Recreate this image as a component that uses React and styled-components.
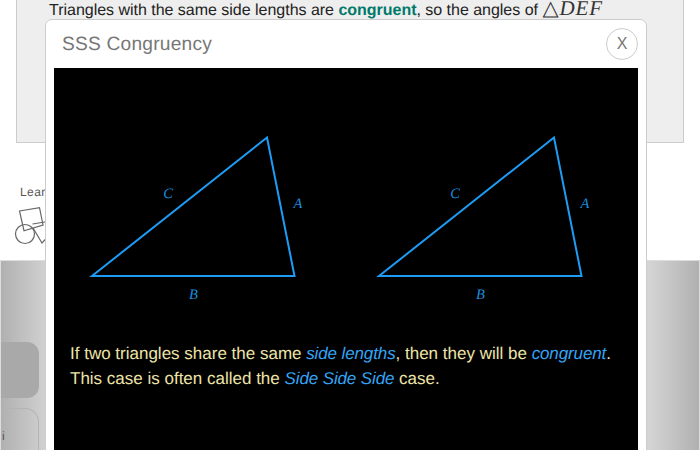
import React from "react";
import styled, { createGlobalStyle } from "styled-components";

const Global = createGlobalStyle`
  html, body { margin: 0; padding: 0; background: #fff; }
  body {
    font-family: "Liberation Sans", Arial, sans-serif;
    text-rendering: geometricPrecision;
  }
`;

const Page = styled.div`
  position: relative;
  width: 700px;
  height: 450px;
  overflow: hidden;
  display: flex;
  flex-direction: column;
  background: #fff;
`;

const Panel = styled.section`
  box-sizing: border-box;
  flex: none;
  height: 143px;
  margin: 0 16px;
  padding: 0 32px;
  background: #eee;
  border: 1px solid #ccc;
  border-top: none;
`;

const Sentence = styled.p`
  margin: -1px 0 0;
  font-size: 16px;
  line-height: 18px;
  letter-spacing: -0.02px;
  color: #222;
  white-space: nowrap;
`;

const Key = styled.strong`
  color: #00796b;
`;

const MathText = styled.span`
  font-family: "Liberation Serif", serif;
  font-style: italic;
  font-size: 21px;
  letter-spacing: 0.9px;
  color: #333;
`;

const Delta = styled.span`
  font-family: "DejaVu Sans", sans-serif;
  font-style: normal;
  font-size: 21px;
`;

const Related = styled.section`
  box-sizing: border-box;
  flex: none;
  height: 117px;
  padding: 42px 0 0 20px;
`;

const RelatedLabel = styled.div`
  font-size: 12px;
  line-height: 14px;
  letter-spacing: 0.4px;
  color: #555;
`;

const ShapesIcon = styled.svg`
  display: block;
  width: 50px;
  height: 46px;
  margin: 7px 0 0 -6px;
`;

const Band = styled.section`
  box-sizing: border-box;
  flex: 1;
  min-height: 0;
  overflow: hidden;
  padding: 81px 0 0 0;
  border: 1px solid #ddd;
  border-bottom: none;
  background: linear-gradient(90deg, #b0b0b0 0, #d4d4d4 7%, #d4d4d4 93%, #b0b0b0 100%);
`;

const SideColumn = styled.div`
  width: 38px;
  display: flex;
  flex-direction: column;
  gap: 10px;
`;

const SideButton = styled.div`
  height: 56px;
  background: #a9a9a9;
  border-radius: 0 12px 12px 0;
`;

const SideCard = styled.div`
  box-sizing: border-box;
  height: 80px;
  padding: 20px 0 0 1px;
  border: 1px solid #b4b4b4;
  border-left: none;
  border-radius: 0 14px 0 0;
  font-size: 12px;
  line-height: 14px;
  color: #555;
`;

const Modal = styled.div`
  position: absolute;
  left: 45px;
  top: 19px;
  width: 602px;
  height: 460px;
  box-sizing: border-box;
  padding: 0 8px;
  background: #fff;
  border: 1px solid #ccc;
  border-radius: 7px;
`;

const ModalHeader = styled.header`
  height: 48px;
  display: flex;
  align-items: center;
  justify-content: space-between;
  padding: 0 0 0 8px;
`;

const ModalTitle = styled.h2`
  margin: 2px 0 0;
  font-size: 19.2px;
  font-weight: 400;
  letter-spacing: 0.2px;
  color: #777;
`;

const CloseButton = styled.button`
  box-sizing: border-box;
  width: 32px;
  height: 32px;
  padding: 0;
  border: 1px solid #ccc;
  border-radius: 50%;
  background: #fff;
  font-family: "Liberation Sans", Arial, sans-serif;
  font-size: 16px;
  color: #777;
`;

const Stage = styled.div`
  width: 584px;
  height: 400px;
  background: #000;
`;

const Figure = styled.svg`
  display: block;
  width: 584px;
  height: 258px;
`;

const SideLabel = styled.text`
  font-family: "Liberation Serif", serif;
  font-style: italic;
  font-size: 14.500px;
  fill: #1c8ede;
  text-anchor: middle;
`;

const Caption = styled.p`
  margin: 15px 16px 0;
  font-size: 17px;
  line-height: 25px;
  color: #eee4a8;
`;

const Term = styled.em`
  color: #35a4f4;
  letter-spacing: -0.12px;
`;

const Triangle = ({ dx }) => (
  <g transform={`translate(${dx} 0)`}>
    <polygon points="38,208 213,69.500 240.500,208" fill="none" stroke="#1e9cf5" strokeWidth="2" />
    <SideLabel x="114" y="130">C</SideLabel>
    <SideLabel x="244" y="140">A</SideLabel>
    <SideLabel x="139.500" y="231">B</SideLabel>
  </g>
);

export default function App() {
  return (
    <Page>
      <Global />
      <Panel>
        <Sentence>
          Triangles with the same side lengths are <Key>congruent</Key>, so the angles of{" "}
          <MathText><Delta>△</Delta>DEF</MathText>
        </Sentence>
      </Panel>
      <Related>
        <RelatedLabel>Learn</RelatedLabel>
        <ShapesIcon viewBox="0 0 50 46" fill="none" stroke="#666" strokeWidth="1.2">
          <polygon points="5.500,5 25.500,1.700 29,19 10,24.700" />
          <circle cx="11" cy="28" r="9.500" />
          <path d="M18.500 18 L40 14.500 M19 22 L28 37 L40 24" />
        </ShapesIcon>
      </Related>
      <Band>
        <SideColumn>
          <SideButton />
          <SideCard>i</SideCard>
        </SideColumn>
      </Band>
      <Modal>
        <ModalHeader>
          <ModalTitle>SSS Congruency</ModalTitle>
          <CloseButton>X</CloseButton>
        </ModalHeader>
        <Stage>
          <Figure viewBox="0 0 584 258">
            <Triangle dx={0} />
            <Triangle dx={287} />
          </Figure>
          <Caption>
            If two triangles share the same <Term>side lengths</Term>, then they will be{" "}
            <Term>congruent</Term>.
            <br />
            This case is often called the <Term>Side Side Side</Term> case.
          </Caption>
        </Stage>
      </Modal>
    </Page>
  );
}
